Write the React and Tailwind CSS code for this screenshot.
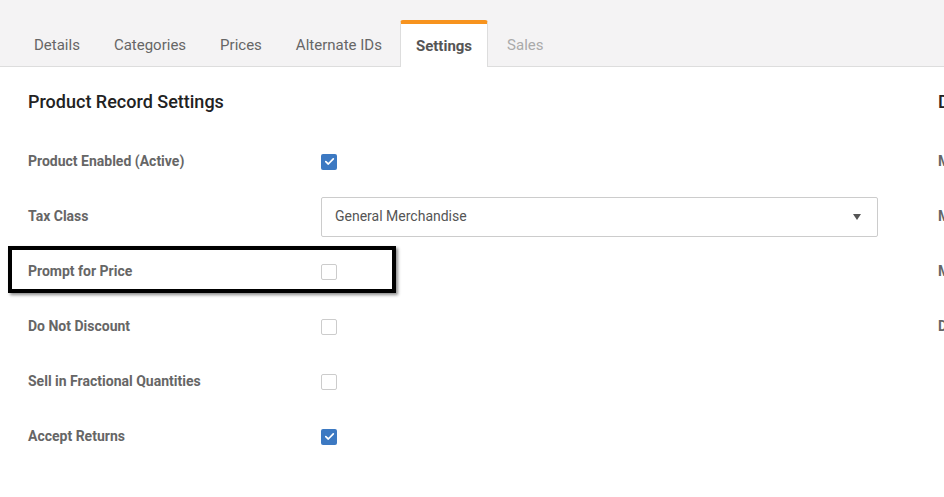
import React from "react";

const tabs = ["Details", "Categories", "Prices", "Alternate IDs", "Settings", "Sales"];

const Checkbox = ({ checked }) =>
  checked ? (
    <span className="flex h-4 w-4 items-center justify-center rounded-[2px] bg-[#3c79c2]">
      <svg width="11" height="9" viewBox="0 0 11 9" fill="none">
        <path d="M1.8 4.7 L4.3 7 L9.3 1.9" stroke="white" strokeWidth="1.7" strokeLinecap="round" strokeLinejoin="round" />
      </svg>
    </span>
  ) : (
    <span className="block h-4 w-4 rounded-[2px] border border-[#cccccc] bg-white" />
  );

const Row = ({ label, children }) => (
  <div className="flex h-[55px] items-center">
    <div className="w-[293px] text-[14px] font-bold text-[#666666]">{label}</div>
    {children}
  </div>
);

const App = () => {
  return (
    <div className="h-[497px] w-[944px] overflow-hidden bg-white font-['Roboto',sans-serif]">
      {/* tab bar */}
      <div className="flex h-[67px] items-end gap-[4px] border-b border-[#dddddd] bg-[#f4f3f4] pl-[19px]">
        {tabs.map((t) =>
          t === "Settings" ? (
            <div
              key={t}
              className="-mb-px ml-[-1px] flex h-[47px] items-center rounded-t-[3px] border-x border-t-4 border-x-[#dddddd] border-t-[#f7931e] bg-white px-[15px] pt-[1px] text-[15px] font-bold text-[#555555]"
            >
              {t}
            </div>
          ) : (
            <div
              key={t}
              className={
                "flex h-[46px] items-center px-[15px] pt-[4px] text-[15px] " +
                (t === "Sales" ? "text-[#aaaaaa]" : "text-[#666666]")
              }
            >
              {t}
            </div>
          )
        )}
      </div>

      <div className="flex gap-[60px] pl-[28px] pt-[23px]">
        {/* left column */}
        <div className="relative w-[850px] shrink-0">
          <h2 className="text-[18px] font-medium leading-[24px] text-[#222222]">Product Record Settings</h2>
          <div className="mt-[20px]">
            <Row label="Product Enabled (Active)">
              <Checkbox checked />
            </Row>
            <Row label="Tax Class">
              <div className="flex h-[40px] w-[557px] items-center justify-between rounded-[2px] border border-[#cccccc] pl-[13px] pr-[16px] text-[14px] text-[#555555]">
                <span>General Merchandise</span>
                <svg width="8" height="6" viewBox="0 0 8 6">
                  <path d="M0 0 H8 L4 6 Z" fill="#555555" />
                </svg>
              </div>
            </Row>
            <Row label="Prompt for Price">
              <Checkbox />
            </Row>
            <Row label="Do Not Discount">
              <Checkbox />
            </Row>
            <Row label="Sell in Fractional Quantities">
              <Checkbox />
            </Row>
            <Row label="Accept Returns">
              <Checkbox checked />
            </Row>
          </div>
          {/* highlight annotation */}
          <div className="absolute left-[-20px] top-[156px] h-[47px] w-[388px] border-[4px] border-black shadow-[2px_2px_3px_rgba(0,0,0,0.45)]" />
        </div>

        {/* right column */}
        <div className="w-[300px] shrink-0">
          <h2 className="text-[18px] font-medium leading-[24px] text-[#222222]">Display Settings</h2>
          <div className="mt-[20px]">
            {["Minimum Quantity", "Maximum Quantity", "Multiple Quantity", "Default Quantity"].map((l) => (
              <div key={l} className="flex h-[55px] items-center text-[14px] font-bold text-[#666666]">
                {l}
              </div>
            ))}
          </div>
        </div>
      </div>
    </div>
  );
};

export default App;
